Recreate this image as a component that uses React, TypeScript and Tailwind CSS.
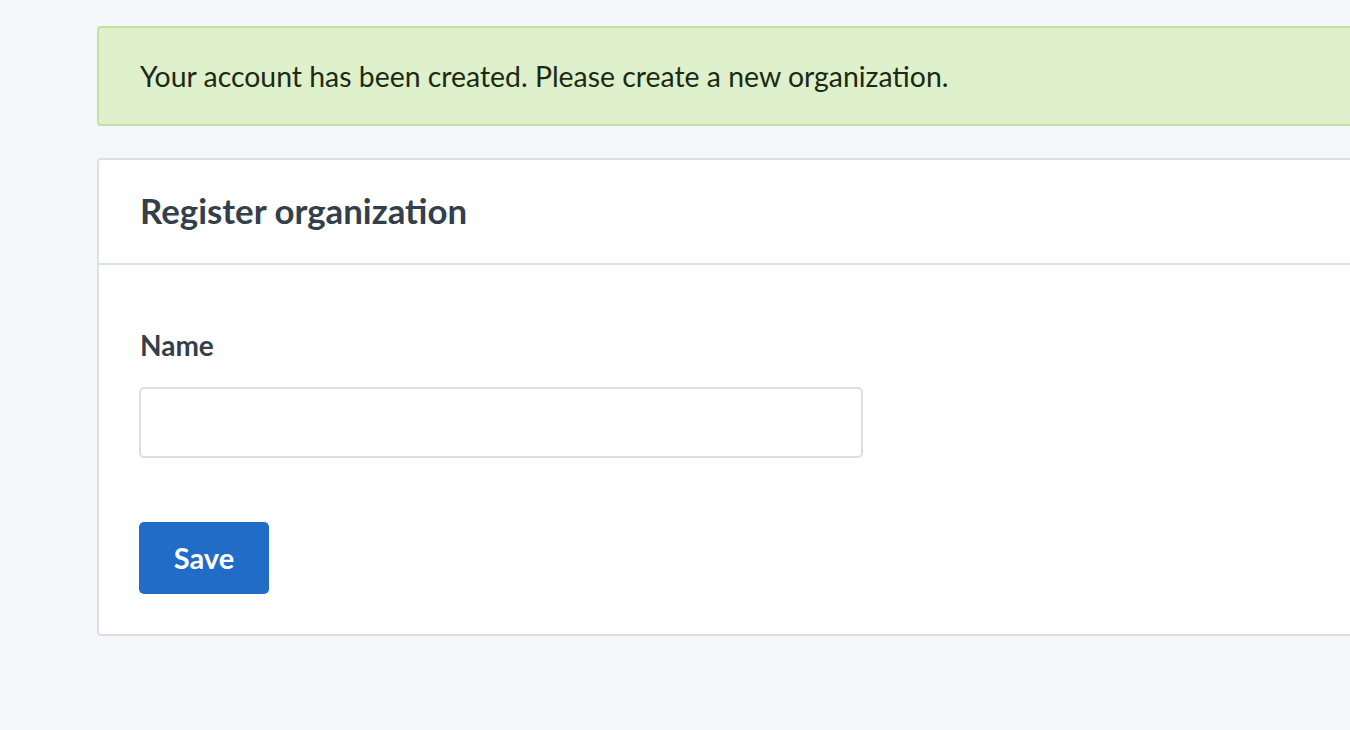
import React from "react";

export default function App() {
  return (
    <div
      className="min-h-[730px] w-full overflow-hidden bg-[#f5f6fa]"
      style={{ fontFamily: "Lato, 'Liberation Sans', sans-serif" }}
    >
      <div className="ml-[97px] w-[1400px] pt-[26px]">
        <div className="flex h-[100px] items-center rounded-[4px] border-2 border-[#bde39c] bg-[#dff0cc] pl-[41px] text-[28.4px] text-[#1b2a12]">
          Your account has been created. Please create a new organization.
        </div>
        <div className="mt-[32px] rounded-[4px] border-2 border-[#dddfe3] bg-white">
          <div className="flex h-[105px] items-center border-b-2 border-[#dddfe3] pl-[41px]">
            <h1 className="text-[34.8px] font-bold text-[#333f4b]">Register organization</h1>
          </div>
          <div className="px-[40px] pt-[64px] pb-[40px]">
            <label className="block pl-[1px] text-[28px] font-bold leading-[32px] text-[#333f4b]">Name</label>
            <input
              type="text"
              className="mt-[26px] block h-[71px] w-[724px] rounded-[5px] border-2 border-[#dfdfe3] bg-white outline-none"
            />
            <button className="mt-[64px] flex h-[72px] w-[130px] items-center justify-center rounded-[5px] bg-[#216cc6] text-[29px] font-bold text-white">
              Save
            </button>
          </div>
        </div>
      </div>
    </div>
  );
}
